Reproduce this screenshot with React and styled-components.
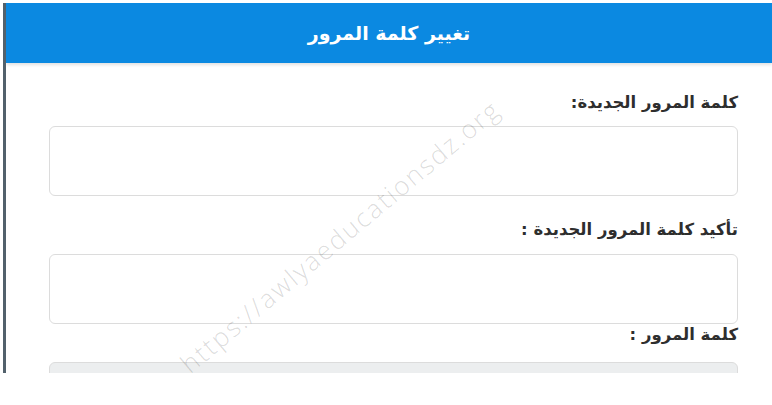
import React from "react";
import styled, { createGlobalStyle } from "styled-components";

const GlobalStyle = createGlobalStyle`
  html, body {
    margin: 0;
    padding: 0;
    background: #ffffff;
  }
  body {
    font-family: "DejaVu Sans", "Noto Sans", sans-serif;
  }
`;

const Page = styled.div`
  width: 772px;
  height: 405px;
  overflow: hidden;
  position: relative;
  background: #ffffff;
`;

const Frame = styled.div`
  margin: 3px 0 0 3px;
  height: 370px;
  border-left: 3px solid #52616c;
  display: flex;
  flex-direction: column;
  overflow: hidden;
`;

const Header = styled.div`
  flex-shrink: 0;
  height: 60px;
  background: #0b89e1;
  display: flex;
  align-items: center;
  justify-content: center;
  box-shadow: 0 2px 3px rgba(0, 0, 0, 0.12);
`;

const Title = styled.h1`
  margin: 0;
  font-size: 19px;
  font-weight: 700;
  color: #ffffff;
  direction: rtl;
  letter-spacing: -0.3px;
`;

const Form = styled.form`
  direction: rtl;
  display: flex;
  flex-direction: column;
  padding: 28px 34px 0 43px;
`;

const Label = styled.label`
  display: block;
  flex-shrink: 0;
  margin-top: ${(p) => p.gap || "0px"};
  font-size: 16.5px;
  line-height: ${(p) => p.lh || "24px"};
  font-weight: 700;
  color: #2e2e2e;
`;

const Input = styled.input`
  flex-shrink: 0;
  box-sizing: border-box;
  width: 100%;
  height: 70px;
  margin-top: ${(p) => p.gap || "11px"};
  border: 1.5px solid #dcdcdc;
  border-radius: 6px;
  background: ${(p) => (p.disabled ? "#eceeef" : "#ffffff")};
  outline: none;
`;

const Watermark = styled.div`
  position: absolute;
  left: 110px;
  top: 218px;
  width: 460px;
  text-align: center;
  font-family: "Open Sans", sans-serif;
  font-weight: 300;
  font-size: 26px;
  letter-spacing: 2px;
  color: rgba(0, 0, 0, 0.15);
  transform: rotate(-40deg);
  pointer-events: none;
  white-space: nowrap;
`;

export default function App() {
  return (
    <Page>
      <GlobalStyle />
      <Frame>
        <Header>
          <Title>تغيير كلمة المرور</Title>
        </Header>
        <Form>
          <Label>كلمة المرور الجديدة:</Label>
          <Input type="password" />
          <Label gap="22px">تأكيد كلمة المرور الجديدة :</Label>
          <Input type="password" gap="12px" />
          <Label lh="22px">كلمة المرور :</Label>
          <Input type="password" gap="16px" disabled />
        </Form>
      </Frame>
      <Watermark>https://awlyaeducationsdz.org</Watermark>
    </Page>
  );
}
